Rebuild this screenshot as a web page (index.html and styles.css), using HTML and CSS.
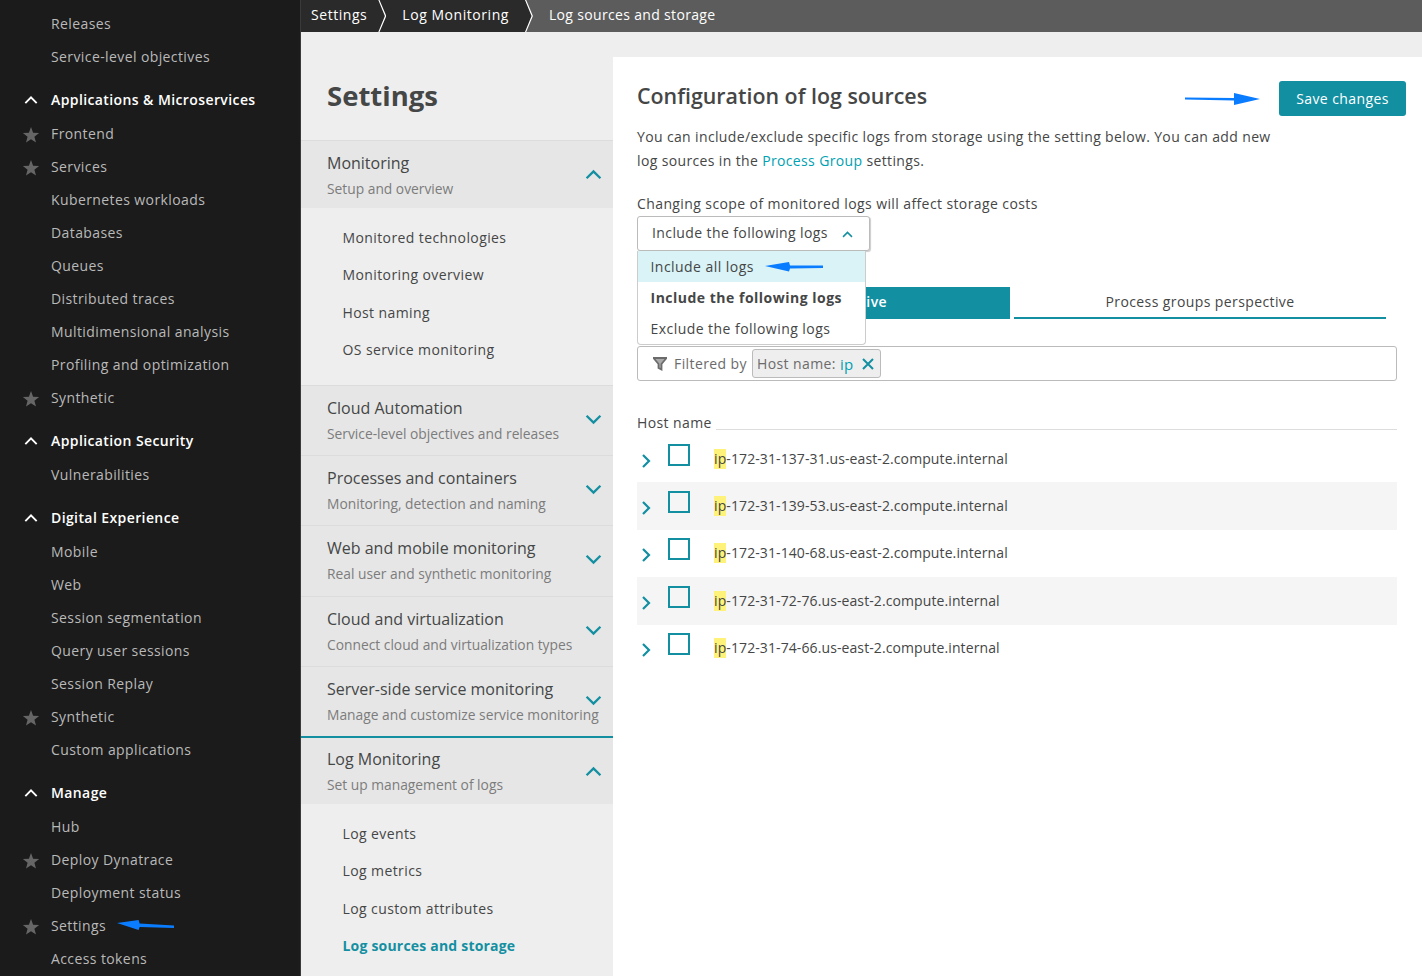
FILE: index.html
```html
<!DOCTYPE html>
<html lang="en">
<head>
<meta charset="UTF-8">
<meta name="viewport" content="width=device-width, initial-scale=1.0">
<title>Log sources and storage</title>
<link rel="stylesheet" href="styles.css">
</head>
<body>
<svg class="defs" width="0" height="0">
  <symbol id="star" viewBox="0 0 18 18"><path d="M9 1l2.100 5.700 6 .2-4.700 3.800 1.600 5.800L9 13.200l-5 3.300 1.600-5.800L.9 6.900l6-.2z"/></symbol>
  <symbol id="up" viewBox="0 0 16 10"><path d="M1.500 8.500L8 2l6.500 6.500" fill="none" stroke="currentColor" stroke-width="2.200"/></symbol>
  <symbol id="down" viewBox="0 0 16 10"><path d="M1.500 1.500L8 8l6.500-6.500" fill="none" stroke="currentColor" stroke-width="2.200"/></symbol>
  <symbol id="right" viewBox="0 0 10 16"><path d="M2 2l6 6-6 6" fill="none" stroke="currentColor" stroke-width="2.200"/></symbol>
</svg>

<aside class="sidebar">
  <ul class="side-group first">
    <li>Releases</li>
    <li>Service-level objectives</li>
  </ul>
  <ul class="side-group">
    <li class="side-head"><svg class="side-chev"><use href="#up"/></svg>Applications &amp; Microservices</li>
    <li><svg class="side-star"><use href="#star"/></svg>Frontend</li>
    <li><svg class="side-star"><use href="#star"/></svg>Services</li>
    <li>Kubernetes workloads</li>
    <li>Databases</li>
    <li>Queues</li>
    <li>Distributed traces</li>
    <li>Multidimensional analysis</li>
    <li>Profiling and optimization</li>
    <li><svg class="side-star"><use href="#star"/></svg>Synthetic</li>
  </ul>
  <ul class="side-group">
    <li class="side-head"><svg class="side-chev"><use href="#up"/></svg>Application Security</li>
    <li>Vulnerabilities</li>
  </ul>
  <ul class="side-group">
    <li class="side-head"><svg class="side-chev"><use href="#up"/></svg>Digital Experience</li>
    <li>Mobile</li>
    <li>Web</li>
    <li>Session segmentation</li>
    <li>Query user sessions</li>
    <li>Session Replay</li>
    <li><svg class="side-star"><use href="#star"/></svg>Synthetic</li>
    <li>Custom applications</li>
  </ul>
  <ul class="side-group">
    <li class="side-head"><svg class="side-chev"><use href="#up"/></svg>Manage</li>
    <li>Hub</li>
    <li><svg class="side-star"><use href="#star"/></svg>Deploy Dynatrace</li>
    <li>Deployment status</li>
    <li class="side-marked"><svg class="side-star"><use href="#star"/></svg>Settings
      <svg class="arrow arrow-side" viewBox="0 0 58 10"><path d="M0 3l22-3 1 3.500 35 2v2.500l-35-1-1 3z"/></svg>
    </li>
    <li>Access tokens</li>
  </ul>
</aside>

<div class="content">
  <nav class="crumbs">
    <a class="crumb">Settings</a>
    <a class="crumb">Log Monitoring</a>
    <a class="crumb crumb-last">Log sources and storage</a>
  </nav>

  <div class="columns">
    <section class="settings-nav">
      <h1>Settings</h1>

      <div class="nav-section open">
        <div class="nav-title">Monitoring</div>
        <div class="nav-sub">Setup and overview</div>
        <svg class="nav-chev"><use href="#up"/></svg>
      </div>
      <ul class="nav-items">
        <li>Monitored technologies</li>
        <li>Monitoring overview</li>
        <li>Host naming</li>
        <li>OS service monitoring</li>
      </ul>

      <div class="nav-section">
        <div class="nav-title">Cloud Automation</div>
        <div class="nav-sub">Service-level objectives and releases</div>
        <svg class="nav-chev"><use href="#down"/></svg>
      </div>
      <div class="nav-section">
        <div class="nav-title">Processes and containers</div>
        <div class="nav-sub">Monitoring, detection and naming</div>
        <svg class="nav-chev"><use href="#down"/></svg>
      </div>
      <div class="nav-section">
        <div class="nav-title">Web and mobile monitoring</div>
        <div class="nav-sub">Real user and synthetic monitoring</div>
        <svg class="nav-chev"><use href="#down"/></svg>
      </div>
      <div class="nav-section">
        <div class="nav-title">Cloud and virtualization</div>
        <div class="nav-sub">Connect cloud and virtualization types</div>
        <svg class="nav-chev"><use href="#down"/></svg>
      </div>
      <div class="nav-section">
        <div class="nav-title">Server-side service monitoring</div>
        <div class="nav-sub">Manage and customize service monitoring</div>
        <svg class="nav-chev"><use href="#down"/></svg>
      </div>
      <div class="nav-section open active">
        <div class="nav-title">Log Monitoring</div>
        <div class="nav-sub">Set up management of logs</div>
        <svg class="nav-chev"><use href="#up"/></svg>
      </div>
      <ul class="nav-items">
        <li>Log events</li>
        <li>Log metrics</li>
        <li>Log custom attributes</li>
        <li class="current">Log sources and storage</li>
      </ul>
    </section>

    <main class="main">
      <header class="main-head">
        <h2>Configuration of log sources</h2>
        <svg class="arrow arrow-save" viewBox="0 0 75 12"><path d="M0 4.500l49 .5V0l26 6-26 6V7.500l-49-1z"/></svg>
        <button class="save">Save changes</button>
      </header>
      <p class="intro">You can include/exclude specific logs from storage using the setting below. You can add new log sources in the <a>Process Group</a> settings.</p>
      <div class="scope-label">Changing scope of monitored logs will affect storage costs</div>

      <div class="scope">
        <div class="select">Include the following logs<svg class="select-chev"><use href="#up"/></svg></div>
        <ul class="menu">
          <li class="hover">Include all logs
            <svg class="arrow arrow-menu" viewBox="0 0 58 10"><path d="M0 4l24-4 1 3.500 33 0v2.500l-33 .5-1 3z"/></svg>
          </li>
          <li class="selected">Include the following logs</li>
          <li>Exclude the following logs</li>
        </ul>
      </div>

      <div class="tabs">
        <div class="tab tab-on">Hosts perspective</div>
        <div class="tab">Process groups perspective</div>
      </div>

      <div class="filter">
        <svg class="funnel" viewBox="0 0 14 14"><path d="M.5 1h13L8.500 7v5.500l-3-1.500V7z" fill="#aaa" stroke="#6b6b6b" stroke-width="1.800"/></svg>
        <span class="filter-label">Filtered by</span>
        <span class="chip">Host name: <b>ip</b>
          <svg class="chip-x" viewBox="0 0 12 12"><path d="M1 1l10 10M11 1L1 11" stroke="#138fa2" stroke-width="2"/></svg>
        </span>
      </div>

      <div class="table-head"><span>Host name</span></div>
      <div class="hosts">
        <div class="host-row">
          <svg class="host-chev"><use href="#right"/></svg><span class="check"></span>
          <span class="host"><mark>ip</mark>-172-31-137-31.us-east-2.compute.internal</span>
        </div>
        <div class="host-row">
          <svg class="host-chev"><use href="#right"/></svg><span class="check"></span>
          <span class="host"><mark>ip</mark>-172-31-139-53.us-east-2.compute.internal</span>
        </div>
        <div class="host-row">
          <svg class="host-chev"><use href="#right"/></svg><span class="check"></span>
          <span class="host"><mark>ip</mark>-172-31-140-68.us-east-2.compute.internal</span>
        </div>
        <div class="host-row">
          <svg class="host-chev"><use href="#right"/></svg><span class="check"></span>
          <span class="host"><mark>ip</mark>-172-31-72-76.us-east-2.compute.internal</span>
        </div>
        <div class="host-row">
          <svg class="host-chev"><use href="#right"/></svg><span class="check"></span>
          <span class="host"><mark>ip</mark>-172-31-74-66.us-east-2.compute.internal</span>
        </div>
      </div>
    </main>
  </div>
</div>
</body>
</html>
```

FILE: styles.css
```css
* {
  box-sizing: border-box;
}
html, body {
  height: 976px;
  overflow: hidden;
}
body {
  margin: 0;
  display: flex;
  font-family: "Open Sans", "Noto Sans", sans-serif;
  font-size: 14px;
  letter-spacing: 0.4px;
  color: #454646;
  background-color: #fff;
}
ul {
  list-style: none;
  margin: 0;
  padding: 0;
}
.defs {
  position: absolute;
}
.arrow {
  position: absolute;
  fill: #0a7cff;
}

/* left dark menu */
.sidebar {
  width: 301px;
  flex: none;
  height: 976px;
  padding-top: 7px;
  background-color: #1b1b1b;
  border-right: 1px solid #3a3a3a;
  color: #b9b9b9;
}
.side-group {
  margin-top: 10px;
}
.side-group.first {
  margin-top: 0;
}
.side-group li {
  position: relative;
  height: 33px;
  line-height: 33px;
  padding-left: 51px;
}
.side-group .side-head {
  height: 34px;
  color: #fff;
  font-weight: 600;
}
.side-chev {
  position: absolute;
  left: 24px;
  top: 12px;
  width: 14px;
  height: 10px;
  color: #fff;
}
.side-star {
  position: absolute;
  left: 22px;
  top: 9px;
  width: 18px;
  height: 18px;
  fill: #666;
}
.arrow-side {
  left: 117px;
  top: 11px;
  width: 57px;
  height: 10px;
}

.content {
  flex: 1;
  min-width: 0;
}

/* breadcrumb */
.crumbs {
  display: flex;
  height: 32px;
  background-color: #5c5c5c;
  color: #fff;
  line-height: 30px;
  letter-spacing: 0.55px;
}
.crumb {
  position: relative;
  padding: 0 12px 0 10px;
  background-color: #2a2a2a;
}
.crumb + .crumb {
  padding: 0 17px 0 23px;
}
.crumb::before {
  content: "";
  position: absolute;
  right: -7px;
  top: 0;
  width: 8px;
  height: 32px;
  background-color: #2a2a2a;
  clip-path: polygon(0 0, 100% 50%, 0 100%);
  z-index: 1;
}
.crumb::after {
  content: "";
  position: absolute;
  right: -7px;
  top: 0;
  width: 8px;
  height: 32px;
  background-color: #fff;
  clip-path: polygon(0 0, 15% 0, 100% 50%, 15% 100%, 0 100%, 82% 50%);
  z-index: 2;
}
.crumb-last {
  background: none;
  letter-spacing: 0.33px;
}
.crumb-last::before, .crumb-last::after {
  display: none;
}

.columns {
  display: flex;
  height: 944px;
  background-color: #eee;
}

/* settings column */
.settings-nav {
  width: 312px;
  flex: none;
}
.settings-nav h1 {
  margin: 0;
  height: 108px;
  padding: 43px 0 0 26px;
  font-size: 27.5px;
  line-height: 42px;
  font-weight: 700;
  letter-spacing: 0;
  color: #454646;
}
.nav-section {
  position: relative;
  height: 70.2px;
  padding: 11px 0 0 26px;
  background-color: #e6e6e6;
  border-top: 1px solid #dcdcdc;
  letter-spacing: 0;
}
.nav-section.open {
  height: 68px;
}
.nav-section.active {
  padding-top: 10px;
  border-top: 2px solid #138fa2;
}
.nav-title {
  font-size: 16px;
  line-height: 22px;
}
.nav-sub {
  margin-top: 5px;
  font-size: 13.8px;
  line-height: 20px;
  white-space: nowrap;
  color: #7c7c7c;
}
.nav-chev {
  position: absolute;
  right: 11px;
  top: 28px;
  width: 17px;
  height: 11px;
  color: #138fa2;
}
.nav-items {
  padding: 10.8px 0 16.2px 41.5px;
}
.nav-items li {
  height: 37.5px;
  line-height: 37px;
}
.nav-items .current {
  color: #138fa2;
  font-weight: 700;
  letter-spacing: 0.2px;
}

/* main panel */
.main {
  flex: 1;
  margin-top: 25px;
  padding: 24px 16px 0 24px;
  background-color: #fff;
}
.main-head {
  position: relative;
  display: flex;
  justify-content: space-between;
  align-items: center;
  height: 35px;
}
.main-head h2 {
  margin: 0 0 5px;
  font-size: 21.4px;
  line-height: 28px;
  font-weight: 600;
  letter-spacing: 0;
}
.save {
  width: 127px;
  height: 35px;
  border: none;
  border-radius: 3px;
  background-color: #138fa2;
  color: #fff;
  font: inherit;
  letter-spacing: inherit;
}
.arrow-save {
  left: 548px;
  top: 12px;
  width: 75px;
  height: 12px;
}
.intro {
  width: 650px;
  margin: 9px 0 0;
  line-height: 24px;
  letter-spacing: 0.36px;
}
.intro a {
  color: #00a1b2;
}
.scope-label {
  margin-top: 19px;
  line-height: 24px;
}
.scope {
  position: relative;
  height: 35px;
}
.select {
  display: flex;
  align-items: center;
  width: 233px;
  height: 35px;
  padding: 0 0 2px 14px;
  border: 1px solid #bbb;
  border-radius: 3px;
  box-shadow: 1px 1px 1px #ccc;
  background-color: #fff;
}
.select-chev {
  width: 11px;
  height: 7px;
  margin: 3px 0 0 14px;
  color: #138fa2;
}
.menu {
  position: absolute;
  left: 0;
  top: 35px;
  z-index: 2;
  width: 229px;
  height: 94px;
  background-color: #fff;
  border: 1px solid #ccc;
  border-top: none;
  border-radius: 0 0 4px 4px;
}
.menu li {
  position: relative;
  height: 31px;
  line-height: 31px;
  padding-left: 12.5px;
  letter-spacing: 0.45px;
}
.menu .hover {
  background-color: #d9f3f6;
}
.menu .selected {
  font-weight: 700;
  letter-spacing: 0.5px;
}
.arrow-menu {
  left: 127px;
  top: 11px;
  width: 58px;
  height: 10px;
}
.tabs {
  display: flex;
  gap: 4px;
  width: 749px;
  margin-top: 36px;
  height: 32px;
}
.tab {
  width: 372px;
  line-height: 30px;
  text-align: center;
  border-bottom: 2px solid #138fa2;
}
.tab-on {
  width: 373px;
  background-color: #138fa2;
  color: #fff;
  font-weight: 600;
}
.filter {
  display: flex;
  align-items: center;
  width: 760px;
  height: 35px;
  margin-top: 27px;
  padding-left: 15px;
  border: 1px solid #bbb;
  border-radius: 3px;
}
.funnel {
  width: 14px;
  height: 14px;
  margin-right: 7px;
}
.filter-label {
  color: #6b6b6b;
}
.chip {
  display: flex;
  align-items: center;
  height: 29px;
  margin-left: 5px;
  padding: 0 6px 0 4px;
  background-color: #eee;
  border: 1px solid #bbb;
  border-radius: 3px;
  white-space: pre;
  color: #6b6b6b;
}
.chip b {
  font-size: 15px;
  font-weight: 400;
  color: #00a1b2;
}
.chip-x {
  width: 12px;
  height: 12px;
  margin-left: 8px;
}
.table-head {
  display: flex;
  align-items: flex-end;
  width: 760px;
  height: 49px;
  line-height: 20px;
}
.table-head span {
  flex: none;
  padding-right: 4px;
  margin-bottom: -3px;
}
.table-head::after {
  content: "";
  flex: 1;
  border-bottom: 1px solid #ddd;
}
.hosts {
  margin-top: 5px;
}
.host-row {
  display: flex;
  align-items: center;
  height: 47.4px;
  width: 760px;
  letter-spacing: 0.1px;
}
.host-row:nth-child(even) {
  background-color: #f5f5f5;
}
.host-chev {
  width: 10px;
  height: 16px;
  margin: 4px 0 0 4px;
  color: #138fa2;
}
.check {
  width: 22px;
  height: 22px;
  margin: -8px 0 0 17px;
  border: 2px solid #138fa2;
}
.host {
  margin-left: 24px;
}
.host mark {
  display: inline-block;
  line-height: 20px;
  background-color: #fff27a;
  color: inherit;
}
```
